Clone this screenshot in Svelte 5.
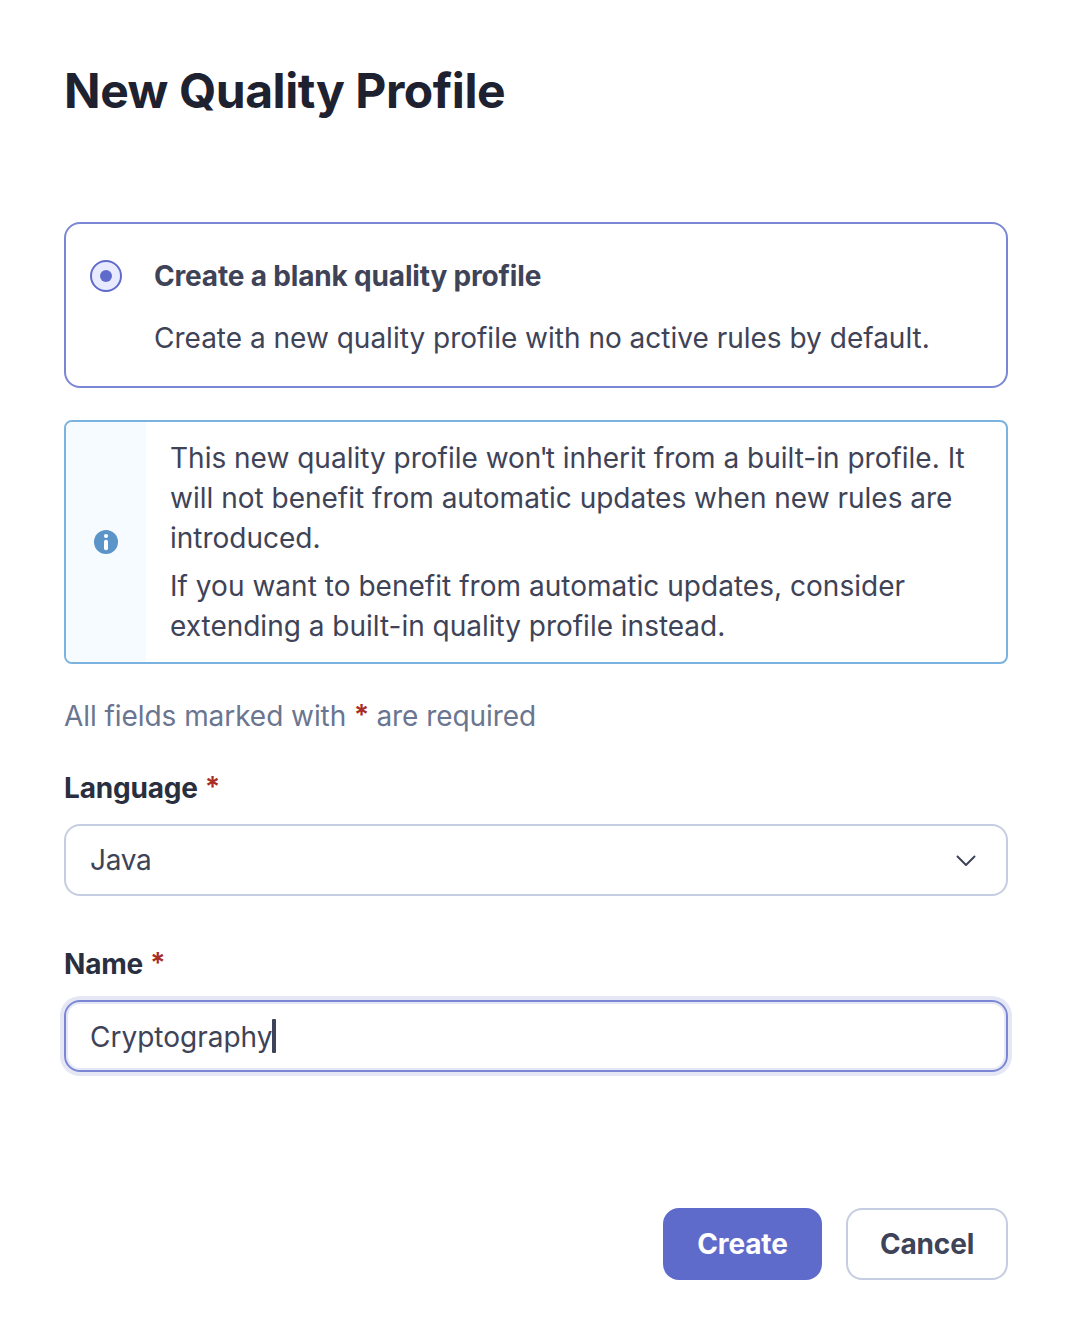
<script>
  let language = $state('Java');
  let name = $state('Cryptography');
</script>

<main class="modal">
  <h1>New Quality Profile</h1>

  <section class="choice">
    <span class="radio"><span class="dot"></span></span>
    <div class="choice-body">
      <h2>Create a blank quality profile</h2>
      <p>Create a new quality profile with no active rules by default.</p>
    </div>
  </section>

  <section class="notice">
    <div class="notice-icon">
      <svg width="24" height="24" viewBox="0 0 24 24">
        <circle cx="12" cy="12" r="12" fill="#5b94c9" />
        <circle cx="12" cy="6" r="2.1" fill="#fff" />
        <rect x="10" y="9.8" width="4" height="10.4" rx="2" fill="#fff" />
      </svg>
    </div>
    <div class="notice-text">
      <p>This new quality profile wo<span class="tight">n'</span>t inherit from a built-in profile. It<br />will not benefit from automatic updates when new rules are<br />introduced.</p>
      <p class="wide">If you want to benefit from automatic updates, consider<br /><span class="snug">extending a built-in quality profile instead.</span></p>
    </div>
  </section>

  <p class="required">All fields marked with <em>*</em> are required</p>

  <div class="label">Language <em>*</em></div>
  <div class="field">
    <span class="value">{language}</span>
    <svg width="20" height="12" viewBox="0 0 20 12">
      <path d="M1.5 1.5 L10 10 L18.5 1.5" fill="none" stroke="#3e4357" stroke-width="2" stroke-linecap="round" stroke-linejoin="round" />
    </svg>
  </div>

  <div class="label second">Name <em>*</em></div>
  <div class="field focused">
    <span>{name}</span><i class="caret"></i>
  </div>

  <footer>
    <button class="primary">Create</button>
    <button class="secondary">Cancel</button>
  </footer>
</main>

<style>
  :global(body) { background: #fff; }
  .modal {
    box-sizing: border-box;
    width: 1072px;
    height: 1344px;
    padding: 61px 64px 64px;
    display: flex;
    flex-direction: column;
    font: 400 28px/40px Inter, sans-serif;
    color: #3e4357;
  }
  h1, h2, p { margin: 0; }
  h1 { font-size: 48px; line-height: 60px; font-weight: 650; letter-spacing: -0.45px; color: #1d2130; }
  em { font-style: normal; font-weight: 600; line-height: 0; vertical-align: 1px; color: #a92d25; }
  .choice {
    box-sizing: border-box;
    height: 166px;
    margin-top: 101px;
    padding: 32px 24px;
    display: flex;
    gap: 32px;
    border: 2px solid #7b87d5;
    border-radius: 16px;
  }
  .radio {
    box-sizing: border-box;
    width: 32px;
    height: 32px;
    margin-top: 4px;
    display: flex;
    align-items: center;
    justify-content: center;
    border: 2px solid #5f6bcb;
    border-radius: 50%;
    background: #e8ebff;
  }
  .dot { width: 12px; height: 12px; border-radius: 50%; background: #5f6bcb; }
  h2 { font-size: 28px; line-height: 40px; font-weight: 650; letter-spacing: -0.17px; }
  .choice-body p { margin-top: 22px; white-space: nowrap; }
  .notice {
    box-sizing: border-box;
    height: 244px;
    margin-top: 32px;
    display: flex;
    border: 2px solid #7ab3df;
    border-radius: 8px;
    overflow: hidden;
  }
  .notice-icon { width: 80px; display: flex; align-items: center; justify-content: center; background: #f5fbff; }
  .notice-text { padding: 16px 0 0 24px; white-space: nowrap; }
  .notice-text p + p { margin-top: 8px; }
  .tight { letter-spacing: -2px; }
  .wide { letter-spacing: 0.03px; }
  .snug { letter-spacing: -0.01px; }
  .value { letter-spacing: -0.3px; }
  .required { margin-top: 32px; color: #6a7590; letter-spacing: -0.06px; }
  .required em { margin-right: -0.5px; }
  .label { margin-top: 32px; font-weight: 650; letter-spacing: -0.2px; color: #2a2f40; }
  .label em { margin-left: 0.8px; }
  .label.second { margin-top: 48px; }
  .field {
    box-sizing: border-box;
    height: 72px;
    margin-top: 16px;
    padding: 0 30px 0 24px;
    display: flex;
    align-items: center;
    border: 2px solid #c5cde0;
    border-radius: 16px;
  }
  .field svg { margin: 2px 0 0 auto; }
  .focused { padding-top: 2px; border-color: #7b87d5; box-shadow: 0 0 0 4px #e5e7f5, inset 0 0 0 2px #e5e7f5; }
  .caret { width: 4px; height: 34px; margin: -2px 0 0 -0.5px; border-radius: 1px; background: #3e4357; }
  footer { margin-top: auto; display: flex; justify-content: flex-end; gap: 24px; }
  button {
    box-sizing: border-box;
    height: 72px;
    padding: 0;
    font: 650 28px/40px Inter, sans-serif;
    letter-spacing: -0.15px;
    border-radius: 16px;
  }
  .primary { width: 159px; border: 0; background: #5f6bcb; color: #fff; }
  .secondary { width: 162px; border: 2px solid #c5cde0; background: #fff; color: #3e4357; }
</style>
